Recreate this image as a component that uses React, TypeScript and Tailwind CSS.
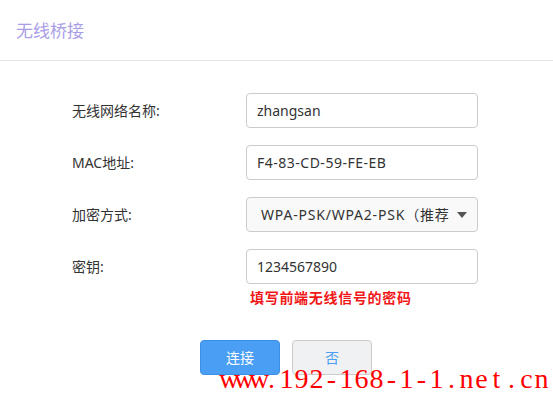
import React from "react";

const font = { fontFamily: '"Noto Sans", "Noto Sans CJK SC", sans-serif' };

function Row({ label, children }: { label: string; children: React.ReactNode }) {
  return (
    <div className="flex items-center h-[35px]">
      <div className="w-[246px] pl-[72px] text-[14px] text-[#333]">{label}</div>
      <div className="w-[232px]">{children}</div>
    </div>
  );
}

const mark = "www.192-168-1-1.net.cn".split("");

export default function App() {
  return (
    <div className="relative w-[553px] h-[395px] bg-white overflow-hidden" style={font}>
      <div className="h-[61px] border-b border-[#e5e5e5] pl-[16px] pt-[19px] text-[17px] leading-[24px] text-[#a99de6]">
        无线桥接
      </div>
      <div className="flex flex-col gap-[17px] pt-[32px]">
        <Row label="无线网络名称:">
          <div className="h-[35px] border border-[#cccccc] rounded-[4px] px-[10px] flex items-center text-[14px] text-[#333]">zhangsan</div>
        </Row>
        <Row label="MAC地址:">
          <div className="h-[35px] border border-[#cccccc] rounded-[4px] px-[10px] flex items-center text-[14px] tracking-[0.5px] text-[#333]">F4-83-CD-59-FE-EB</div>
        </Row>
        <Row label="加密方式:">
          <div className="h-[35px] border border-[#cccccc] rounded-[4px] bg-[#f9f9f9] pl-[14px] pr-[10px] flex items-center text-[14px] tracking-[0.8px] text-[#333]">
            <div className="w-[188px] overflow-hidden whitespace-nowrap">WPA-PSK/WPA2-PSK（推荐）</div>
            <div className="ml-auto w-0 h-0 border-l-[5px] border-r-[5px] border-t-[6px] border-l-transparent border-r-transparent border-t-[#555]" />
          </div>
        </Row>
        <div className="flex flex-col">
          <Row label="密钥:">
            <div className="h-[35px] border border-[#cccccc] rounded-[4px] px-[10px] flex items-center text-[14px] text-[#333]">1234567890</div>
          </Row>
          <div className="pl-[250px] pt-[5px] text-[14px] leading-[18px] font-bold tracking-[0.7px] text-[#f01818]">填写前端无线信号的密码</div>
        </div>
      </div>
      <div className="flex gap-[12px] pl-[200px] pt-[33px]">
        <button className="w-[80px] h-[35px] rounded-[4px] bg-[#4a9ff5] border border-[#3a8ee6] text-white text-[14px]">连接</button>
        <button className="w-[80px] h-[35px] rounded-[4px] bg-[#f0f1f3] border border-[#cccccc] text-[#4a9ff5] text-[14px]">否</button>
      </div>
      <div
        className="absolute left-[219px] top-[364px] flex text-[28px] leading-[30px] text-[#ff0000] whitespace-nowrap"
        style={{ fontFamily: '"Liberation Serif", serif' }}
      >
        {mark.map((c, i) => (
          <span key={i} className="w-[15px] text-center inline-block">{c}</span>
        ))}
      </div>
    </div>
  );
}
